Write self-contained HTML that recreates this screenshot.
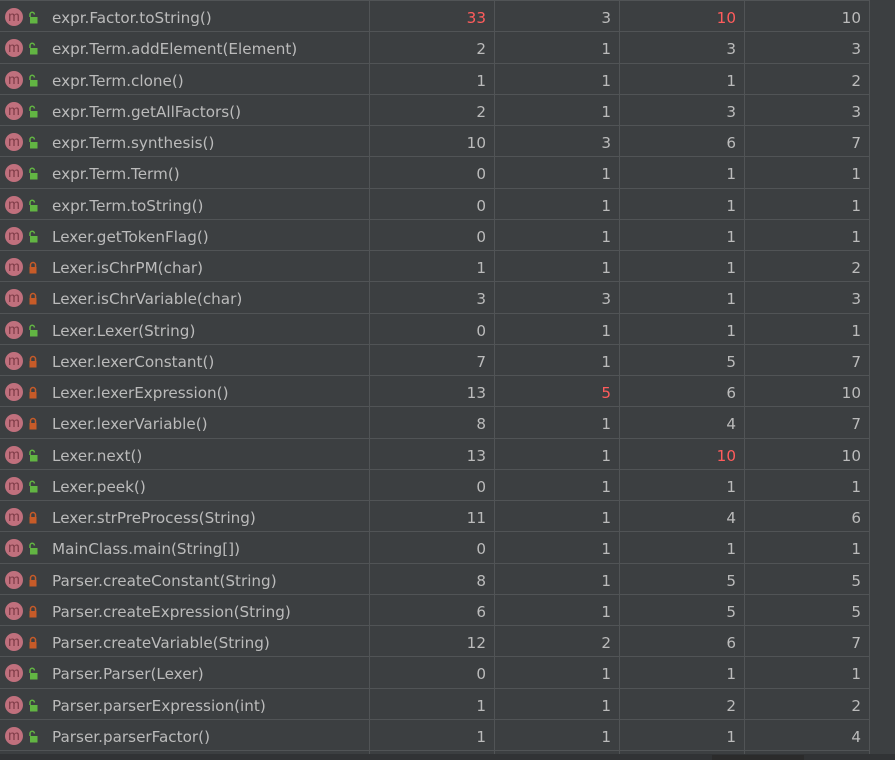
<!DOCTYPE html>
<html><head><meta charset="utf-8"><style>
html,body{margin:0;padding:0;width:895px;height:760px;overflow:hidden;background:#3c3f41;font-family:"DejaVu Sans","Liberation Sans",sans-serif;}
.row{position:absolute;left:0;width:869px;height:31.25px;border-bottom:1px solid #515456;box-sizing:border-box;color:#bbbbbb;font-size:15.2px;}
.row div{position:absolute;top:0;height:30px;line-height:34px;}
.name{left:52px;letter-spacing:0}
.c{text-align:right;width:110px;}
.c1{left:376px}.c2{left:501px}.c3{left:626px}.c4{left:751px}
.r{color:#ff5c5c}
.ic{position:absolute;left:5px;top:7px;width:18px;height:18px;border-radius:50%;background:#c0707d;color:#7d3a46;font-size:14px;line-height:17px;text-align:center;font-family:"Liberation Sans",sans-serif}
.vl{position:absolute;top:0;height:754px;width:1px;background:#515456}
</style></head><body>
<div id="t"></div>
<div class="vl" style="left:369px"></div><div class="vl" style="left:494px"></div><div class="vl" style="left:619px"></div><div class="vl" style="left:744px"></div><div class="vl" style="left:869px"></div>
<div style="position:absolute;left:0;top:0;width:869px;height:1px;background:#515456"></div>
<div style="position:absolute;left:0;top:754px;width:895px;height:6px;background:#313335"></div>
<div style="position:absolute;left:712px;top:755px;width:92px;height:5px;background:#2b2b2b"></div>
<script>
var d=[["expr.Factor.toString()","33r","3","10r","10",1],
["expr.Term.addElement(Element)","2","1","3","3",1],
["expr.Term.clone()","1","1","1","2",1],
["expr.Term.getAllFactors()","2","1","3","3",1],
["expr.Term.synthesis()","10","3","6","7",1],
["expr.Term.Term()","0","1","1","1",1],
["expr.Term.toString()","0","1","1","1",1],
["Lexer.getTokenFlag()","0","1","1","1",1],
["Lexer.isChrPM(char)","1","1","1","2",0],
["Lexer.isChrVariable(char)","3","3","1","3",0],
["Lexer.Lexer(String)","0","1","1","1",1],
["Lexer.lexerConstant()","7","1","5","7",0],
["Lexer.lexerExpression()","13","5r","6","10",0],
["Lexer.lexerVariable()","8","1","4","7",0],
["Lexer.next()","13","1","10r","10",1],
["Lexer.peek()","0","1","1","1",1],
["Lexer.strPreProcess(String)","11","1","4","6",0],
["MainClass.main(String[])","0","1","1","1",1],
["Parser.createConstant(String)","8","1","5","5",0],
["Parser.createExpression(String)","6","1","5","5",0],
["Parser.createVariable(String)","12","2","6","7",0],
["Parser.Parser(Lexer)","0","1","1","1",1],
["Parser.parserExpression(int)","1","1","2","2",1],
["Parser.parserFactor()","1","1","1","4",1]];
var h="";
function cell(v,k){var r=v.slice(-1)=="r";return '<div class="c c'+k+(r?' r':'')+'">'+(r?v.slice(0,-1):v)+'</div>';}
d.forEach(function(x,i){
var top=1+31.25*i;
var lock=x[5]?'<svg style="position:absolute;left:28px;top:10px" width="10" height="13" viewBox="0 0 10 13"><path d="M2 6V3.5a2.2 2.2 0 0 1 4.4 0" fill="none" stroke="#62b543" stroke-width="1.5"/><rect x="2" y="6" width="7.5" height="6.5" fill="#62b543"/></svg>':'<svg style="position:absolute;left:28px;top:10px" width="10" height="13" viewBox="0 0 10 13"><path d="M2.5 6V4a2.5 2.5 0 0 1 5 0V6" fill="none" stroke="#c75b28" stroke-width="1.5"/><rect x="1.5" y="6" width="7" height="6.5" fill="#c75b28"/></svg>';
h+='<div class="row" style="top:'+top+'px"><span class="ic">m</span>'+lock+'<div class="name">'+x[0]+'</div>'+cell(x[1],1)+cell(x[2],2)+cell(x[3],3)+cell(x[4],4)+'</div>';
});
document.getElementById("t").innerHTML=h;
</script>
</body></html>
